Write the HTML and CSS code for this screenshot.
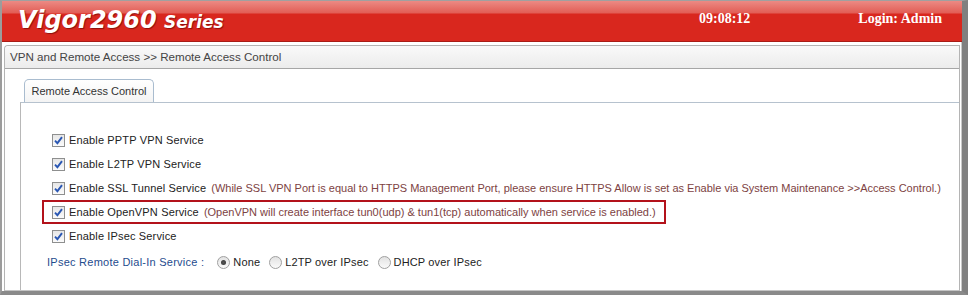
FILE: index.html
```html
<!DOCTYPE html>
<html lang="en">
<head>
    <meta charset="UTF-8">
    <title>Remote Access Control</title>
    <link rel="stylesheet" href="styles.css">
</head>
<body>
    <div class="window">
        <div class="topbar">
            <div class="logo">Vigor2960 <span class="series">Series</span></div>
            <div class="clock">09:08:12</div>
            <div class="login">Login: Admin</div>
        </div>

        <div class="main">
            <div class="crumb">VPN and Remote Access &gt;&gt; Remote Access Control</div>

            <div class="tabs">
                <div class="tab">Remote Access Control</div>
            </div>

            <div class="panel">
                <div class="row">
                    <span class="cb"><svg width="9" height="9" viewBox="0 0 9 9"><path d="M1 4.6 L3.4 7.2 L8 1.2" fill="none" stroke="#2a57b3" stroke-width="1.9"/></svg></span>
                    <span class="label">Enable PPTP VPN Service</span>
                </div>
                <div class="row">
                    <span class="cb"><svg width="9" height="9" viewBox="0 0 9 9"><path d="M1 4.6 L3.4 7.2 L8 1.2" fill="none" stroke="#2a57b3" stroke-width="1.9"/></svg></span>
                    <span class="label">Enable L2TP VPN Service</span>
                </div>
                <div class="row">
                    <span class="cb"><svg width="9" height="9" viewBox="0 0 9 9"><path d="M1 4.6 L3.4 7.2 L8 1.2" fill="none" stroke="#2a57b3" stroke-width="1.9"/></svg></span>
                    <span class="label">Enable SSL Tunnel Service</span>
                    <span class="note">(While SSL VPN Port is equal to HTTPS Management Port, please ensure HTTPS Allow is set as Enable via System Maintenance &gt;&gt;Access Control.)</span>
                </div>
                <div class="row highlight">
                    <span class="cb"><svg width="9" height="9" viewBox="0 0 9 9"><path d="M1 4.6 L3.4 7.2 L8 1.2" fill="none" stroke="#2a57b3" stroke-width="1.9"/></svg></span>
                    <span class="label">Enable OpenVPN Service</span>
                    <span class="note">(OpenVPN will create interface tun0(udp) &amp; tun1(tcp) automatically when service is enabled.)</span>
                </div>
                <div class="row">
                    <span class="cb"><svg width="9" height="9" viewBox="0 0 9 9"><path d="M1 4.6 L3.4 7.2 L8 1.2" fill="none" stroke="#2a57b3" stroke-width="1.9"/></svg></span>
                    <span class="label">Enable IPsec Service</span>
                </div>

                <div class="row dialin">
                    <span class="field">IPsec Remote Dial-In Service :</span>
                    <span class="radio checked"></span>
                    <span class="label opt">None</span>
                    <span class="radio"></span>
                    <span class="label opt">L2TP over IPsec</span>
                    <span class="radio"></span>
                    <span class="label opt">DHCP over IPsec</span>
                </div>
            </div>
        </div>
    </div>
</body>
</html>
```

FILE: styles.css
```css
body {
    margin: 0;
    width: 968px;
    height: 295px;
    overflow: hidden;
    background: #fff;
    font-family: "Liberation Sans", Arial, sans-serif;
    color: #222;
}

/* outer frame with the grey drop shadow on right and bottom */
.window {
    box-sizing: border-box;
    height: 295px;
    display: flex;
    flex-direction: column;
    border-top: 1px solid #a0a0a0;
    border-left: 2px solid #9c9c9c;
    border-right: 6px solid #808080;
    border-bottom: 4px solid #8a8a8a;
    box-shadow: inset -1px 0 0 #c8c8c8;
}

/* red header */
.topbar {
    height: 40px;
    display: flex;
    align-items: flex-start;
    background: linear-gradient(#ec8a84 0, #e25d55 12px, #d9271e 13px, #d9271e 100%);
    border-bottom: 1px solid #a81c16;
    color: #fff;
}

.logo {
    margin: 5px 0 0 16px;
    font-family: "DejaVu Sans", Verdana, sans-serif;
    font-weight: bold;
    font-style: italic;
    font-size: 24px;
    line-height: 28px;
    letter-spacing: 0;
    text-shadow: 1px 1px 1px rgba(90, 0, 0, 0.6);
}

.series {
    font-size: 17px;
    margin-left: -1px;
}

.clock,
.login {
    font-family: "Liberation Serif", "Times New Roman", serif;
    font-weight: bold;
    font-size: 14px;
    margin-top: 10px;
}

.clock {
    margin-left: auto;
}

.login {
    margin-left: 108px;
    margin-right: 20px;
}

/* content box */
.main {
    flex: 1;
    display: flex;
    flex-direction: column;
    margin: 3px 2px 0 2px;
    border: 1px solid #b4b4b4;
    border-bottom-color: #c4c4c4;
    border-radius: 4px 0 0 0;
}

.crumb {
    height: 22px;
    line-height: 21px;
    padding-left: 5px;
    font-size: 11.6px;
    color: #444;
    background: linear-gradient(#f9f9f9, #ececec);
    border-bottom: 1px solid #a6a6a6;
    border-radius: 4px 0 0 0;
}

.tabs {
    display: flex;
    padding: 10px 0 0 19px;
}

.tab {
    box-sizing: border-box;
    height: 23px;
    width: 130px;
    text-align: center;
    line-height: 22px;
    font-size: 11px;
    color: #333;
    background: linear-gradient(#fff, #f4f4f4);
    border: 1px solid #a9bccf;
    border-bottom: none;
    border-radius: 5px 5px 0 0;
}

.panel {
    flex: 1;
    margin-left: 15px;
    padding: 25px 0 0 31px;
    border-top: 1px solid #b6c2ce;
    border-left: 1px solid #b8b8b8;
}

/* option rows */
.row {
    box-sizing: border-box;
    height: 24px;
    display: flex;
    align-items: center;
    font-size: 11px;
}

.highlight {
    width: 624px;
    margin-left: -10px;
    padding-left: 8px;
    border: 2px solid #b3121b;
}

.cb {
    box-sizing: border-box;
    width: 13px;
    height: 13px;
    display: flex;
    align-items: center;
    justify-content: center;
    border: 1px solid #8e8f8f;
    background: linear-gradient(#e6e6e6, #fbfbfb);
    margin-right: 4px;
}

.label {
    letter-spacing: 0.15px;
    color: #222;
}

.note {
    margin-left: 5px;
    color: #7d4242;
}

.dialin {
    margin: 2px 0 0 -5px;
}

.field {
    color: #1f4c8e;
    letter-spacing: 0.25px;
    margin-right: 13px;
}

.radio {
    box-sizing: border-box;
    width: 13px;
    height: 13px;
    border-radius: 50%;
    border: 1px solid #a0a0a0;
    background: linear-gradient(#e2e2e2, #fafafa);
    margin-right: 3px;
    display: flex;
    align-items: center;
    justify-content: center;
}

.radio.checked::after {
    content: "";
    width: 5px;
    height: 5px;
    border-radius: 50%;
    background: radial-gradient(#555, #333);
}

.opt {
    margin-right: 9px;
    letter-spacing: 0.15px;
}
```
